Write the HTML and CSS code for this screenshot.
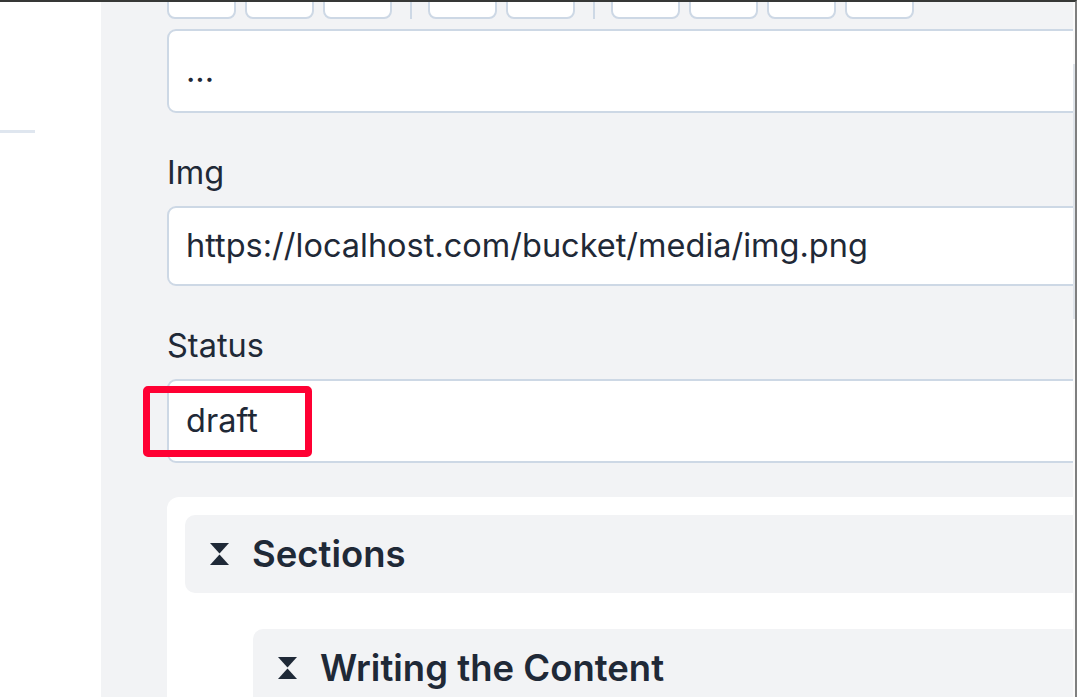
FILE: index.html
```html
<!DOCTYPE html>
<html lang="en">
<head>
<meta charset="utf-8">
<title>Editor</title>
<link rel="stylesheet" href="styles.css">
</head>
<body>
<div class="window">
  <aside class="sidebar">
    <div class="sidebar-rule"></div>
  </aside>
  <main class="main">
    <div class="form">
      <div class="toolbar">
        <span class="tool"></span>
        <span class="tool"></span>
        <span class="tool"></span>
        <span class="tool-sep"></span>
        <span class="tool"></span>
        <span class="tool"></span>
        <span class="tool-sep"></span>
        <span class="tool"></span>
        <span class="tool"></span>
        <span class="tool"></span>
        <span class="tool"></span>
      </div>
      <div class="box box-area">...</div>

      <label class="label">Img</label>
      <div class="box box-img">https://localhost.com/bucket/media/img.png</div>

      <label class="label">Status</label>
      <div class="status-wrap">
        <div class="box box-status">draft</div>
        <div class="highlight"></div>
      </div>

      <section class="card">
        <div class="group-head">
          <svg class="collapse-icon" width="19" height="22" viewBox="0 0 19 22" aria-hidden="true">
            <polygon points="0,0 19,0 9.5,10.6"/>
            <polygon points="9.5,11.4 19,22 0,22"/>
          </svg>
          <h2 class="group-title">Sections</h2>
        </div>
        <div class="nested">
          <div class="group-head">
            <svg class="collapse-icon" width="19" height="22" viewBox="0 0 19 22" aria-hidden="true">
              <polygon points="0,0 19,0 9.5,10.6"/>
              <polygon points="9.5,11.4 19,22 0,22"/>
            </svg>
            <h3 class="group-title">Writing the Content</h3>
          </div>
        </div>
      </section>
    </div>
  </main>
  <div class="scrollbar"><div class="thumb"></div></div>
</div>
</body>
</html>
```

FILE: styles.css
```css
html, body {
  margin: 0;
  padding: 0;
}
body {
  font-family: "Inter", "Noto Sans", sans-serif;
  color: #1f2937;
  background: #ffffff;
}
.window {
  display: flex;
  width: 1077px;
  height: 697px;
  box-sizing: border-box;
  border-top: 2px solid #363836;
  border-right: 2px solid #7f7f7f;
  overflow: hidden;
}
.sidebar {
  width: 101px;
  flex: 0 0 101px;
  background: #ffffff;
}
.sidebar-rule {
  margin-top: 128px;
  width: 35px;
  height: 3px;
  background: #dfe6ef;
}
.main {
  flex: 1 1 auto;
  min-width: 0;
  background: #f2f3f5;
  overflow: hidden;
  padding-left: 66px;
}
.form {
  width: 1100px;
  display: flex;
  flex-direction: column;
}
.toolbar {
  display: flex;
  align-items: flex-end;
  gap: 9.5px;
  margin-top: -20px;
  height: 37px;
}
.tool {
  width: 68.5px;
  height: 37px;
  box-sizing: border-box;
  border: 2px solid #cdd8e5;
  border-radius: 8px;
  background: #ffffff;
}
.tool-sep {
  width: 1.5px;
  height: 37px;
  margin: 0 7px 0 9px;
  background: #cdd8e5;
}
.box {
  box-sizing: border-box;
  border: 2px solid #cdd8e5;
  border-radius: 9px;
  background: #ffffff;
  display: flex;
  align-items: center;
  padding-left: 17px;
  font-size: 32.5px;
  line-height: 48px;
  white-space: nowrap;
}
.box-area {
  margin-top: 10px;
  height: 84px;
}
.box-img {
  height: 80px;
}
.box-status {
  height: 84px;
}
.label {
  display: block;
  font-size: 32.5px;
  line-height: 48px;
  margin-top: 36px;
  margin-bottom: 9px;
}
.status-wrap {
  position: relative;
}
.highlight {
  position: absolute;
  left: -24px;
  top: 7px;
  width: 169px;
  height: 71px;
  box-sizing: border-box;
  border: 7px solid #ff0033;
  border-radius: 5px;
}
.card {
  margin-top: 34px;
  background: #ffffff;
  border-radius: 12px;
  padding: 18px;
  padding-bottom: 200px;
}
.group-head {
  height: 78px;
  background: #f2f3f5;
  border-radius: 10px;
  display: flex;
  align-items: center;
  gap: 23px;
  padding-left: 25px;
}
.collapse-icon {
  fill: #1f2937;
  flex: 0 0 auto;
}
.group-title {
  margin: 0;
  font-size: 36.5px;
  font-weight: 600;
  line-height: 48px;
  color: #1f2937;
}
.nested {
  margin: 36px 0 0 68px;
}
.scrollbar {
  flex: 0 0 2px;
  width: 2px;
  background: #fafafa;
  padding-top: 62px;
  box-sizing: border-box;
}
.thumb {
  height: 255px;
  background: #dfe4ea;
}
```
